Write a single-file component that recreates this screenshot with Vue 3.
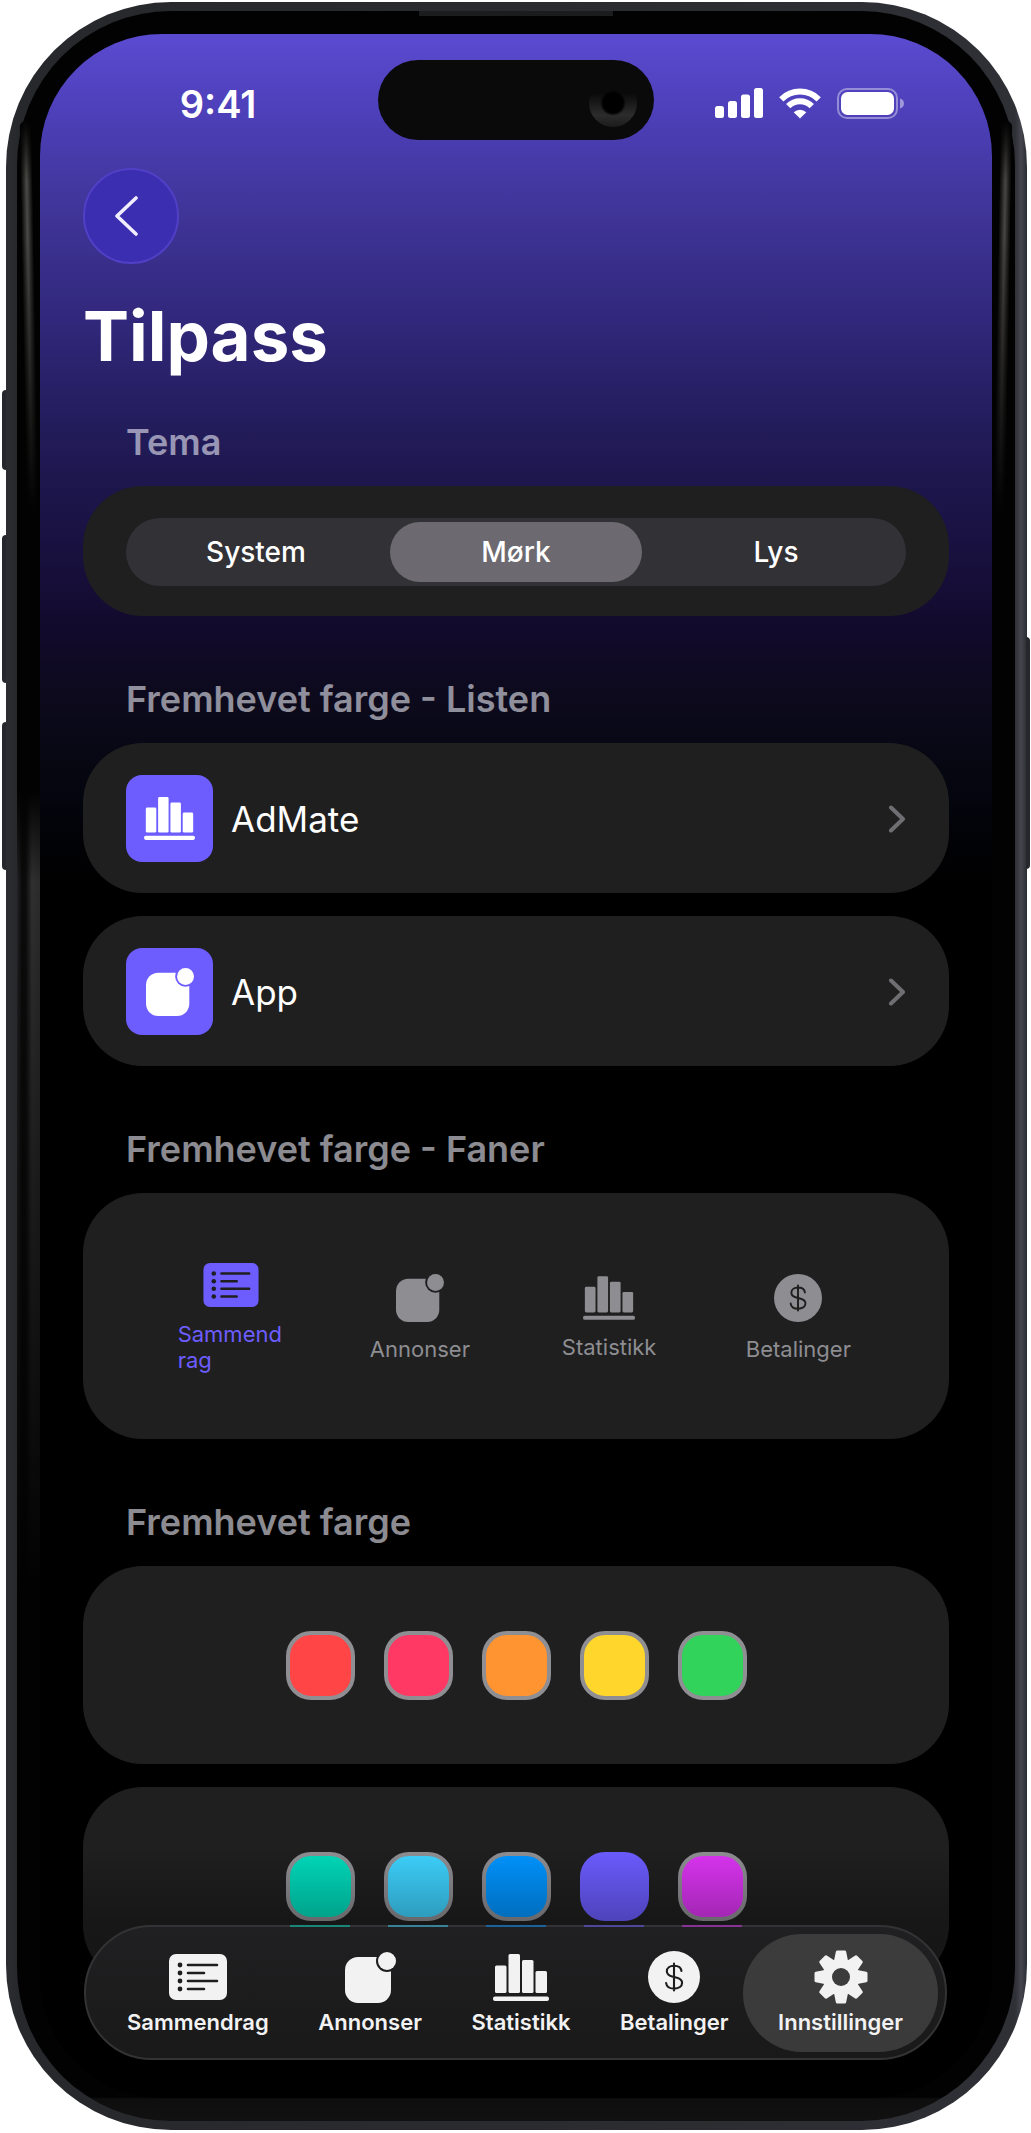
<script setup>
import { ref } from 'vue'

const themes = ['System', 'Mørk', 'Lys']
const theme = ref('Mørk')

const listRows = [
  { label: 'AdMate', icon: 'chart' },
  { label: 'App', icon: 'app' },
]

const tabs = [
  { label: 'Sammendrag', icon: 'list' },
  { label: 'Annonser', icon: 'app' },
  { label: 'Statistikk', icon: 'chart' },
  { label: 'Betalinger', icon: 'dollar' },
]
const navItems = [...tabs, { label: 'Innstillinger', icon: 'gear' }]

const swatchRows = [
  [
    { name: 'Rød', color: '#ff4545' },
    { name: 'Rosa', color: '#ff3864' },
    { name: 'Oransje', color: '#ff9430' },
    { name: 'Gul', color: '#ffd62b' },
    { name: 'Grønn', color: '#32d35a' },
  ],
  [
    { name: 'Mint', color: '#00dabb' },
    { name: 'Cyan', color: '#3dd2fe' },
    { name: 'Blå', color: '#0094ff' },
    { name: 'Indigo', color: '#6b5cff' },
    { name: 'Lilla', color: '#db34f2' },
  ],
]
const accent = ref('Indigo')
</script>

<template>
  <div class="device">
    <i class="key key-action"></i>
    <i class="key key-up"></i>
    <i class="key key-down"></i>
    <i class="key key-power"></i>

    <!-- Shared icon shapes -->
    <svg class="defs" aria-hidden="true">
      <symbol id="i-list" viewBox="0 0 58 46">
        <mask id="m-list">
          <rect width="58" height="46" rx="7" fill="#fff" />
          <g fill="#000">
            <circle cx="11" cy="11" r="2.4" /><circle cx="11" cy="19" r="2.4" />
            <circle cx="11" cy="27" r="2.4" /><circle cx="11" cy="35" r="2.4" />
          </g>
          <path d="M19 11h29M19 19h16M19 27h29M19 35h16" stroke="#000" stroke-width="2.6" stroke-linecap="round" />
        </mask>
        <rect width="58" height="46" fill="currentColor" mask="url(#m-list)" />
      </symbol>
      <symbol id="i-app" viewBox="0 0 51 51">
        <mask id="m-app">
          <rect y="5" width="46" height="46" rx="13" fill="#fff" />
          <circle cx="42" cy="9" r="11" fill="#000" />
        </mask>
        <rect width="51" height="51" fill="currentColor" mask="url(#m-app)" />
        <circle cx="42" cy="9" r="9" fill="currentColor" />
      </symbol>
      <symbol id="i-chart" viewBox="0 0 56 47">
        <g fill="currentColor">
          <rect x="2" y="11.5" width="11.5" height="27.5" rx="1.5" />
          <rect x="15.5" y="0" width="11.5" height="39" rx="1.5" />
          <rect x="29" y="6" width="11.5" height="33" rx="1.5" />
          <rect x="42.5" y="17" width="11.5" height="22" rx="1.5" />
          <rect x="0" y="42.5" width="56" height="4.5" rx="2" />
        </g>
      </symbol>
      <symbol id="i-dollar" viewBox="0 0 52 52">
        <mask id="m-dollar">
          <circle cx="26" cy="26" r="26" fill="#fff" />
          <path
            d="M26 12.5v27M33.5 20c-.4-3.300-3.400-5.300-7.500-5.300-4.200 0-7.200 2.300-7.200 5.600 0 3 2.100 4.500 6.200 5.400l2.200.5c4.700 1 6.900 2.700 6.900 5.600 0 3.500-3.100 5.800-7.900 5.800-4.600 0-7.700-2.100-8.100-5.600"
            fill="none" stroke="#000" stroke-width="2.1" stroke-linecap="round"
          />
        </mask>
        <rect width="52" height="52" fill="currentColor" mask="url(#m-dollar)" />
      </symbol>
      <symbol id="i-gear" viewBox="-27 -27 54 54">
        <mask id="m-gear">
          <rect x="-27" y="-27" width="54" height="54" fill="#000" />
          <circle r="18.5" fill="#fff" />
          <g fill="#fff" stroke="#fff" stroke-width="3" stroke-linejoin="round">
            <path v-for="n in 8" :key="n" d="M-5.500 -16L-3.700 -25H3.700L5.500 -16Z" :transform="`rotate(${n * 45})`" />
          </g>
          <circle r="9" fill="#000" />
        </mask>
        <rect x="-27" y="-27" width="54" height="54" fill="currentColor" mask="url(#m-gear)" />
      </symbol>
    </svg>

    <div class="bezel">
      <i class="sheen"></i>
      <div class="screen">
        <header class="status">
          <span class="time">9:41</span>
          <span class="island"><i class="lens"></i></span>
          <span class="status-icons">
            <svg width="48" height="30" viewBox="0 0 48 30" fill="#fff">
              <rect x="0" y="18" width="9" height="12" rx="2.5" />
              <rect x="13" y="13" width="9" height="17" rx="2.5" />
              <rect x="26" y="6.5" width="9" height="23.5" rx="2.5" />
              <rect x="39" y="0" width="9" height="30" rx="2.5" />
            </svg>
            <svg width="42" height="31" viewBox="0 0 42 31" fill="none" stroke="#fff" stroke-width="6">
              <path d="M2.300 11.300a26.500 26.500 0 0 1 37.400 0" />
              <path d="M9.200 18.200a16.700 16.700 0 0 1 23.600 0" />
              <path d="M21 30.500l-6.300-6.300a9 9 0 0 1 12.600 0z" fill="#fff" stroke="none" />
            </svg>
            <svg width="67" height="31" viewBox="0 0 67 31">
              <rect x="1" y="1" width="59" height="29" rx="9" fill="none" stroke="#fff" stroke-opacity=".4" stroke-width="2" />
              <rect x="4" y="4" width="53" height="23" rx="6.5" fill="#fff" />
              <path d="M63 10.500c2.600.6 4 2.600 4 5s-1.400 4.400-4 5z" fill="#fff" fill-opacity=".45" />
            </svg>
          </span>
        </header>

        <main class="content">
          <button class="back" type="button" aria-label="Tilbake">
            <svg width="24" height="42" viewBox="0 0 24 42" fill="none" stroke="#f1edff" stroke-width="3.6" stroke-linecap="round" stroke-linejoin="round">
              <path d="M21 3L2 21l19 18" />
            </svg>
          </button>
          <h1>Tilpass</h1>

          <section>
            <h2>Tema</h2>
            <div class="card theme-card">
              <div class="segments" role="radiogroup" aria-label="Tema">
                <label v-for="t in themes" :key="t" class="segment" :class="{ active: theme === t }">
                  <input v-model="theme" type="radio" name="theme" :value="t" />
                  {{ t }}
                </label>
              </div>
            </div>
          </section>

          <section>
            <h2>Fremhevet farge - Listen</h2>
            <div class="stack">
              <a v-for="row in listRows" :key="row.label" href="#" class="card row">
                <span class="tile">
                  <svg :class="['tile-icon', row.icon]"><use :href="`#i-${row.icon}`" /></svg>
                </span>
                <span class="row-label">{{ row.label }}</span>
                <svg width="18" height="28" viewBox="0 0 18 28" fill="none" stroke="#6f6f73" stroke-width="4" stroke-linecap="round" stroke-linejoin="round">
                  <path d="M3 2.500L15 14 3 25.500" />
                </svg>
              </a>
            </div>
          </section>

          <section>
            <h2>Fremhevet farge - Faner</h2>
            <div class="card preview">
              <div v-for="(tab, i) in tabs" :key="tab.label" class="preview-tab" :class="{ active: i === 0 }">
                <svg :class="['preview-icon', tab.icon]"><use :href="`#i-${tab.icon}`" /></svg>
                <span>{{ tab.label }}</span>
              </div>
            </div>
          </section>

          <section>
            <h2>Fremhevet farge</h2>
            <div class="stack">
              <div v-for="(colors, r) in swatchRows" :key="r" class="card swatches">
                <label v-for="c in colors" :key="c.name" class="swatch" :class="{ active: accent === c.name }" :style="{ backgroundColor: c.color }">
                  <input v-model="accent" type="radio" name="accent" :value="c.name" :aria-label="c.name" />
                </label>
              </div>
            </div>
          </section>
        </main>

        <div class="fade"></div>

        <nav class="tabbar">
          <div class="glints">
            <i v-for="c in swatchRows[1]" :key="c.name" :style="{ backgroundColor: c.color }"></i>
          </div>
          <a v-for="item in navItems" :key="item.label" href="#" class="tab" :class="{ active: item.icon === 'gear' }">
            <span class="tab-icon"><svg :class="item.icon"><use :href="`#i-${item.icon}`" /></svg></span>
            <span>{{ item.label }}</span>
          </a>
        </nav>
      </div>
    </div>
  </div>
</template>

<style>
body {
  margin: 0;
  background: #fff;
}
</style>

<style scoped>
* {
  box-sizing: border-box;
}
.device {
  position: relative;
  margin: 2px 4px 3px 6px;
  padding: 9px 12px 9px 11px;
  border-radius: 165px;
  background: linear-gradient(90deg, #2b2d31 0, #26282c 12px, #2a2b2e 50%, #2f3036 calc(100% - 12px), #44454d calc(100% - 6px), #2b2d33 100%);
  font-family: Inter, "Liberation Sans", sans-serif;
  color: #fff;
}
.defs {
  position: absolute;
  width: 0;
  height: 0;
}
.key {
  position: absolute;
  width: 4px;
  background: #25272c;
}
.key-action, .key-up, .key-down {
  left: -4px;
  border-radius: 4px 0 0 4px;
}
.key-action { top: 388px; height: 80px; }
.key-up { top: 533px; height: 148px; }
.key-down { top: 720px; height: 148px; }
.key-power {
  right: -3px;
  top: 635px;
  height: 232px;
  border-radius: 0 4px 4px 0;
}
.bezel {
  position: relative;
  padding: 23px;
  border-radius: 154px;
  background:
    linear-gradient(#1b1c1e, #1b1c1e) top center / 194px 5px no-repeat,
    linear-gradient(#020202 0 calc(100% - 24px), #0e0e0f calc(100% - 22px), #111 100%);
}
.bezel::before, .bezel::after {
  content: "";
  position: absolute;
  top: 110px;
  width: 12px;
  height: 390px;
  border-radius: 6px;
}
.bezel::before {
  left: 6px;
  background: linear-gradient(#020202, transparent 60px, transparent 30%, #020202), linear-gradient(90deg, #020202, #4a4a46, #020202);
  transform: rotate(-1deg);
}
.bezel::after {
  right: 6px;
  background: linear-gradient(#020202, transparent 60px, transparent 30%, #020202), linear-gradient(90deg, #020202, #484644, #020202);
  transform: rotate(1deg);
}
.sheen {
  position: absolute;
  left: 0;
  top: 780px;
  width: 23px;
  height: 800px;
  background: linear-gradient(#020202, transparent 90px, #020202), linear-gradient(90deg, #242426 0, #0a0a0a 5px, #0c0c0c 9px, #303030 15px, #2a2a2a);
}
.screen {
  position: relative;
  overflow: hidden;
  padding: 26px 0 113px;
  border-radius: 122px;
  background: #000 linear-gradient(#5b4bd1 0, #4b3eb5 90px, #41369b 166px, #332a80 270px, #261f62 366px, #1c164c 452px, #170f3a 540px, #120a2b 596px, #0c0a1c 666px, #04050d 766px, #000 850px) no-repeat;
}
.status {
  display: grid;
  grid-template-columns: 1fr 276px 1fr;
  align-items: center;
}
.time {
  padding: 8px 0 0 18px;
  text-align: center;
  font-size: 38px;
  line-height: 46px;
  font-weight: 600;
}
.island {
  display: flex;
  align-items: center;
  justify-content: flex-end;
  height: 80px;
  padding: 6px 17px 0 0;
  border-radius: 40px;
  background: #0a0a0a;
}
.lens {
  width: 48px;
  height: 48px;
  border-radius: 50%;
  background: radial-gradient(circle, #000 0 10px, transparent 13px), linear-gradient(#0a0a0a 30%, #2c2c2c 75%, #1c1c1c);
}
.status-icons {
  display: flex;
  justify-content: center;
  align-items: center;
  gap: 16px;
  padding: 6px 27px 0 0;
}
.content {
  padding: 28px 43px 0;
}
.back {
  display: flex;
  align-items: center;
  justify-content: center;
  width: 96px;
  height: 96px;
  padding: 0 8px 0 0;
  border: 2px solid #5140c6;
  border-radius: 50%;
  background: #3b2eb0;
}
h1 {
  margin: 29px 0 0;
  font-size: 69px;
  line-height: 87px;
  font-weight: 700;
}
h2 {
  margin: 61px 0 22px;
  padding-left: 43px;
  font-size: 36px;
  line-height: 44px;
  font-weight: 600;
  color: rgb(235 235 245 / .6);
}
h1 + section h2 {
  margin-top: 40px;
}
.card {
  border-radius: 60px;
  background: #1f1f1f;
}
.theme-card {
  padding: 32px 43px 30px;
}
.segments {
  display: grid;
  grid-template-columns: repeat(3, 1fr);
  gap: 8px;
  padding: 4px;
  border-radius: 34px;
  background: #323136;
}
.segment {
  display: flex;
  align-items: center;
  justify-content: center;
  height: 60px;
  border-radius: 30px;
  font-size: 28px;
  font-weight: 500;
}
.segment.active {
  background: #6c6a70;
}
input {
  position: absolute;
  margin: 0;
  opacity: 0;
}
.stack {
  display: flex;
  flex-direction: column;
  gap: 23px;
}
.row {
  display: flex;
  align-items: center;
  height: 150px;
  padding: 1px 43px 0;
  color: #fff;
  text-decoration: none;
}
.tile {
  display: flex;
  align-items: center;
  justify-content: center;
  width: 87px;
  height: 87px;
  border-radius: 16px;
  background: #6d5dff;
}
.tile-icon.chart { width: 51px; height: 43px; }
.tile-icon.app { width: 48px; height: 48px; }
.row-label {
  flex: 1;
  padding-left: 18px;
  font-size: 35px;
}
.preview {
  display: grid;
  grid-template-columns: repeat(4, 1fr);
  align-items: center;
  height: 246px;
  padding: 3px 56px 0 53px;
}
.preview-tab {
  display: flex;
  flex-direction: column;
  align-items: center;
  gap: 14px;
  font-size: 22px;
  line-height: 26px;
  color: #8d8d92;
}
.preview-tab span {
  max-width: 106px;
  overflow-wrap: anywhere;
}
.preview-tab.active {
  color: #6d5dff;
}
.preview-icon.list { width: 56px; height: 44px; }
.preview-icon.app { width: 48px; height: 48px; }
.preview-icon.chart { width: 52px; height: 44px; }
.preview-icon.dollar { width: 48px; height: 48px; }
.swatches {
  display: flex;
  align-items: center;
  justify-content: center;
  gap: 29px;
  height: 198px;
}
.swatch {
  width: 69px;
  height: 69px;
  border: 4px solid #8e8e93;
  border-radius: 25px;
}
.swatch.active {
  border-color: #6b5cff;
}
.fade {
  position: absolute;
  left: 0;
  right: 0;
  bottom: 0;
  height: 250px;
  background: linear-gradient(transparent, rgb(0 0 0 / .26) 70px, rgb(0 0 0 / .4));
  pointer-events: none;
}
.tabbar {
  position: absolute;
  left: 44px;
  right: 45px;
  bottom: 38px;
  display: flex;
  justify-content: space-between;
  height: 135px;
  padding: 7px 42px 7px 41px;
  border: 2px solid #333335;
  border-radius: 68px;
  background: linear-gradient(#202022, #191919);
}
.glints {
  position: absolute;
  top: -2px;
  left: 0;
  right: 0;
  display: flex;
  justify-content: center;
  gap: 38px;
}
.glints i {
  width: 60px;
  height: 2px;
  opacity: .5;
}
.tab {
  position: relative;
  display: flex;
  flex-direction: column;
  align-items: center;
  gap: 3px;
  padding-top: 15px;
  font-size: 22px;
  line-height: 28px;
  font-weight: 600;
  color: #f2f2f3;
  text-decoration: none;
}
.tab > span {
  position: relative;
}
.tab.active::before {
  content: "";
  position: absolute;
  top: 0;
  left: -35px;
  right: -35px;
  height: 118px;
  border-radius: 59px;
  background: linear-gradient(#3c3c3d, #3a3a3a);
}
.tab-icon {
  display: flex;
  align-items: center;
  justify-content: center;
  height: 56px;
}
.tab-icon .list { width: 58px; height: 46px; }
.tab-icon .app { width: 51px; height: 51px; }
.tab-icon .chart { width: 56px; height: 47px; }
.tab-icon .dollar { width: 52px; height: 52px; }
.tab-icon .gear { width: 54px; height: 54px; }
</style>
